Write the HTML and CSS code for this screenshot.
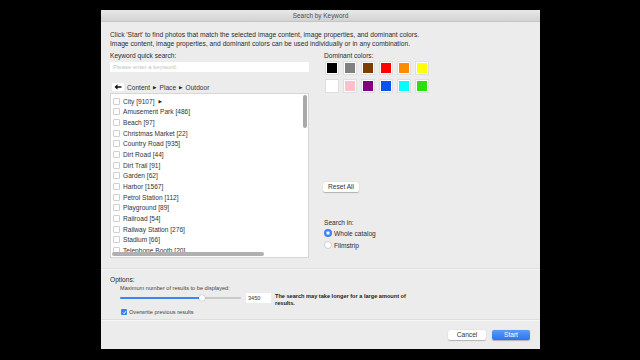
FILE: index.html
```html
<!DOCTYPE html>
<html>
<head>
<meta charset="utf-8">
<link rel="stylesheet" href="styles.css">
</head>
<body>
<div class="window">
  <div class="titlebar">Search by Keyword</div>
  <div class="top">
    <div class="desc">Click 'Start' to find photos that match the selected image content, image properties, and dominant colors.<br>Image content, image properties, and dominant colors can be used individually or in any combination.</div>
    <div class="main">
      <div class="left">
        <div class="label">Keyword quick search:</div>
        <div class="search">Please enter a keyword.</div>
        <div class="crumbs">
          <span class="back"><svg width="8" height="6" viewBox="0 0 8 6"><path d="M0.5 3 L3.5 0.3 L3.5 2.2 L7.5 2.2 L7.5 3.8 L3.5 3.8 L3.5 5.7 Z" fill="#111"/></svg></span>
          <span class="crumb">Content</span><span class="tri">▶</span><span class="crumb">Place</span><span class="tri">▶</span><span class="crumb">Outdoor</span>
        </div>
        <div class="list">
          <div class="item"><span class="cb"></span>City [9107]<span class="tri sub">▶</span></div>
          <div class="item"><span class="cb"></span>Amusement Park [486]</div>
          <div class="item"><span class="cb"></span>Beach [97]</div>
          <div class="item"><span class="cb"></span>Christmas Market [22]</div>
          <div class="item"><span class="cb"></span>Country Road [935]</div>
          <div class="item"><span class="cb"></span>Dirt Road [44]</div>
          <div class="item"><span class="cb"></span>Dirt Trail [91]</div>
          <div class="item"><span class="cb"></span>Garden [62]</div>
          <div class="item"><span class="cb"></span>Harbor [1567]</div>
          <div class="item"><span class="cb"></span>Petrol Station [112]</div>
          <div class="item"><span class="cb"></span>Playground [89]</div>
          <div class="item"><span class="cb"></span>Railroad [54]</div>
          <div class="item"><span class="cb"></span>Railway Station [276]</div>
          <div class="item"><span class="cb"></span>Stadium [66]</div>
          <div class="item"><span class="cb"></span>Telephone Booth [20]</div>
          <div class="vscroll"></div>
          <div class="hscroll"></div>
        </div>
      </div>
      <div class="right">
        <div class="label">Dominant colors:</div>
        <div class="swatches">
          <span class="sw"><i class="c-black"></i></span>
          <span class="sw"><i class="c-gray"></i></span>
          <span class="sw"><i class="c-brown"></i></span>
          <span class="sw"><i class="c-red"></i></span>
          <span class="sw"><i class="c-orange"></i></span>
          <span class="sw"><i class="c-yellow"></i></span>
          <span class="sw"><i class="c-white"></i></span>
          <span class="sw"><i class="c-pink"></i></span>
          <span class="sw"><i class="c-purple"></i></span>
          <span class="sw"><i class="c-blue"></i></span>
          <span class="sw"><i class="c-cyan"></i></span>
          <span class="sw"><i class="c-green"></i></span>
        </div>
        <div class="btn reset">Reset All</div>
        <div class="label searchin">Search in:</div>
        <div class="radio"><span class="rd on"></span>Whole catalog</div>
        <div class="radio"><span class="rd"></span>Filmstrip</div>
      </div>
    </div>
  </div>
  <div class="sep"></div>
  <div class="options">
    <div class="label">Options:</div>
    <div class="small indent">Maximum number of results to be displayed:</div>
    <div class="sliderrow">
      <div class="slider"><div class="fill"></div><div class="thumb"></div></div>
      <div class="num">3450</div>
      <div class="note">The search may take longer for a large amount of<br>results.</div>
    </div>
    <div class="checkrow"><span class="cb checked"><svg width="5" height="5" viewBox="0 0 5 5"><path d="M1 2.6 L2.1 3.7 L4 1.2" stroke="#fff" stroke-width="1" fill="none"/></svg></span>Overwrite previous results</div>
  </div>
  <div class="sep"></div>
  <div class="footer">
    <div class="btn cancel">Cancel</div>
    <div class="btn start">Start</div>
  </div>
</div>
</body>
</html>
```

FILE: styles.css
```css
* { box-sizing: border-box; }
body {
  margin: 0;
  background: #000;
  height: 360px;
  overflow: hidden;
  font-family: "Liberation Sans", Arial, sans-serif;
  color: #333;
}
.window {
  margin: 10px 0 0 101px;
  width: 439px;
  height: 339px;
  background: #ececec;
  display: flex;
  flex-direction: column;
}
.titlebar {
  height: 12px;
  line-height: 12px;
  text-align: center;
  font-size: 6.4px;
  color: #4d4d4d;
  background: linear-gradient(#e8e8e8, #d3d3d3);
  border-bottom: 1px solid #c4c4c4;
}
.top {
  padding: 8px 9px 0 9px;
  height: 246px;
}
.desc {
  font-size: 6.7px;
  line-height: 9px;
  color: #2c2c2c;
}
.main {
  display: flex;
  gap: 14px;
}
.left { width: 199px; }
.label {
  font-size: 6.6px;
  line-height: 9px;
  margin-top: 3px;
  color: #2c2c2c;
}
.search {
  margin-top: 2px;
  height: 10px;
  background: #fff;
  font-size: 6px;
  line-height: 10px;
  padding-left: 3px;
  color: #c4c4c4;
}
.crumbs {
  margin-top: 10px;
  height: 10px;
  display: flex;
  align-items: center;
  font-size: 6.6px;
  color: #333;
}
.back {
  width: 12px;
  height: 8px;
  margin-left: 2px;
  margin-right: 3px;
  background: #fff;
  display: flex;
  align-items: center;
  justify-content: center;
}
.tri {
  font-family: "DejaVu Sans", sans-serif;
  font-size: 4.5px;
  margin: 0 3px;
  color: #222;
}
.list {
  position: relative;
  margin-top: 1px;
  height: 165px;
  background: #fff;
  border: 1px solid #d6d6d6;
  overflow: hidden;
  padding-top: 2px;
}
.item {
  height: 10.66px;
  display: flex;
  align-items: center;
  font-size: 6.6px;
  color: #333;
  padding-left: 2px;
  white-space: nowrap;
}
.cb {
  width: 7px;
  height: 7px;
  background: #fff;
  border: 1px solid #cfcfcf;
  border-radius: 1px;
  margin-right: 3px;
  flex: none;
}
.tri.sub { margin-left: 4px; }
.vscroll {
  position: absolute;
  left: 192px;
  top: 1px;
  width: 4px;
  height: 33px;
  background: #a9a9a9;
  border-radius: 2px;
}
.hscroll {
  position: absolute;
  left: 1px;
  top: 158px;
  width: 152px;
  height: 4px;
  background: #b0b0b0;
  border-radius: 2px;
}
.right { flex: 1; padding-left: 1px; }
.swatches {
  margin-top: 1px;
  margin-left: 1px;
  display: grid;
  grid-template-columns: repeat(6, 14px);
  grid-auto-rows: 14px;
  column-gap: 4px;
  row-gap: 4px;
}
.sw {
  background: #fff;
  border: 1px solid #dedede;
  padding: 1px;
  display: block;
}
.sw i { display: block; width: 100%; height: 100%; }
.c-black { background: #000; }
.c-gray { background: #808080; }
.c-brown { background: #7b3d00; }
.c-red { background: #ff0000; }
.c-orange { background: #ff8a00; }
.c-yellow { background: #ffff00; }
.c-white { background: #fff; }
.c-pink { background: #ffc0cb; }
.c-purple { background: #800080; }
.c-blue { background: #0a55f0; }
.c-cyan { background: #00ffff; }
.c-green { background: #2ddd10; }
.btn {
  height: 10px;
  line-height: 10px;
  font-size: 6.6px;
  text-align: center;
  background: #fff;
  color: #333;
  border-radius: 2px;
  box-shadow: 0 0.5px 1px rgba(0,0,0,0.25);
}
.reset {
  width: 36px;
  margin-left: -1px;
  margin-top: 89px;
}
.searchin { margin-top: 26px; }
.radio {
  height: 12px;
  display: flex;
  align-items: center;
  font-size: 6.6px;
  color: #2c2c2c;
}
.rd {
  width: 8px;
  height: 8px;
  border-radius: 50%;
  background: #fff;
  border: 1px solid #cfcfcf;
  margin-right: 2px;
}
.rd.on {
  border: 2px solid #3b82f0;
  background: #fff;
  box-shadow: inset 0 0 0 0.3px #3b82f0;
}
.sep {
  background: #dedede;
  border-bottom: 1px solid #f6f6f6;
  height: 2px;
}
.options {
  height: 49px;
  padding: 5px 9px 0 9px;
}
.options .label { margin-top: 0; }
.small {
  font-size: 5.6px;
  line-height: 8px;
  color: #444;
}
.indent { margin-left: 10px; }
.sliderrow {
  display: flex;
  align-items: flex-start;
  margin-left: 10px;
  margin-top: 1px;
  height: 15px;
}
.slider {
  position: relative;
  width: 121px;
  height: 10px;
}
.slider::before {
  content: "";
  position: absolute;
  left: 0; right: 0; top: 4px;
  height: 2px;
  background: #c9c9c9;
  border-radius: 1px;
}
.fill {
  position: absolute;
  left: 0; top: 4px;
  width: 82px;
  height: 2px;
  background: #3f86f2;
  border-radius: 1px;
}
.thumb {
  position: absolute;
  left: 79px; top: 2px;
  width: 6px; height: 6px;
  border-radius: 50%;
  background: #fff;
  box-shadow: 0 0 1px rgba(0,0,0,0.5);
}
.num {
  margin-left: 5px;
  width: 25px;
  height: 10px;
  background: #fff;
  font-size: 5.6px;
  line-height: 10px;
  padding-left: 2px;
  color: #333;
}
.note {
  margin-left: 4px;
  font-size: 5.6px;
  line-height: 7px;
  font-weight: bold;
  color: #222;
}
.checkrow {
  margin-left: 11px;
  height: 8px;
  display: flex;
  align-items: center;
  font-size: 5.6px;
  color: #444;
}
.cb.checked {
  width: 6px; height: 6px;
  background: #3b82f0;
  border: none;
  margin-right: 2px;
  display: flex;
  align-items: center;
  justify-content: center;
}
.footer {
  flex: 1;
  display: flex;
  justify-content: flex-end;
  gap: 6px;
  padding: 9px 10px 0 0;
}
.cancel { width: 38px; }
.start {
  width: 38px;
  background: linear-gradient(#5b9cf8, #2a74ef);
  color: #fff;
}
```
